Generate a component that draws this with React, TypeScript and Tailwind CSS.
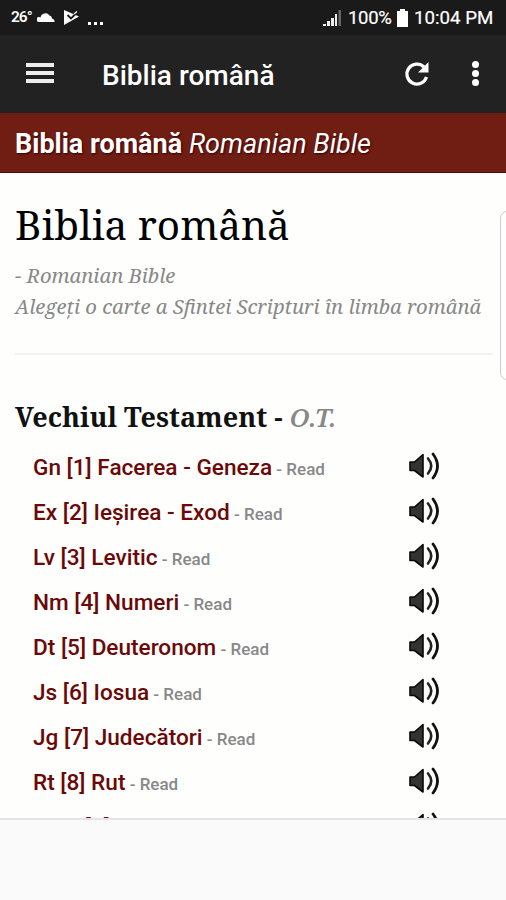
interface Book {
  abbr: string;
  num: number;
  name: string;
}

const BOOKS: Book[] = [
  { abbr: 'Gn', num: 1, name: 'Facerea - Geneza' },
  { abbr: 'Ex', num: 2, name: 'Ieșirea - Exod' },
  { abbr: 'Lv', num: 3, name: 'Levitic' },
  { abbr: 'Nm', num: 4, name: 'Numeri' },
  { abbr: 'Dt', num: 5, name: 'Deuteronom' },
  { abbr: 'Js', num: 6, name: 'Iosua' },
  { abbr: 'Jg', num: 7, name: 'Judecători' },
  { abbr: 'Rt', num: 8, name: 'Rut' },
  { abbr: '1Sm', num: 9, name: '1 Samuel' },
];

function SpeakerIcon() {
  return (
    <svg width="32" height="30" viewBox="0 0 32 30" fill="none" className="mb-[3px]">
      <path d="M2 11h4.500L15 3.500v22.500L6.500 19.500H2z" fill="#333" stroke="#080808" strokeWidth="1.600" strokeLinejoin="round" />
      <path d="M20 7.500Q26.500 15 20 22.500" stroke="#222" strokeWidth="2.600" strokeLinecap="round" />
      <path d="M25 3Q34 15 25 27" stroke="#111" strokeWidth="2.800" strokeLinecap="round" />
    </svg>
  );
}

function StatusBar() {
  return (
    <div className="flex h-[35px] items-center bg-[#1a1a1a] pl-[11px] pr-[13px] pt-px text-white">
      <span className="w-[26px] text-[15.500px] font-semibold tracking-[-1px]">26°</span>
      <svg width="18" height="10" viewBox="0 0 18 10" className="mt-[-3px]">
        <path d="M2 10a2.500 2.500 0 0 1 0-5q1 0 1.500.5A5 5 0 0 1 12.500 3.500a3 3 0 0 1 2.500 3q3 .5 2.500 3.500z" fill="#fff" />
      </svg>
      <svg width="17" height="17" viewBox="0 0 17 17" className="mt-[-2px] ml-[8px]">
        <path d="M1 1l15 6.500L1 16z" fill="#fff" />
        <path d="M4.500 6l3.500 3.500L14.500 3" fill="none" stroke="#1a1a1a" strokeWidth="1.800" />
        <path d="M11 5l3-2.500" stroke="#fff" strokeWidth="1.200" />
      </svg>
      <div className="ml-[8px] mt-[11px] flex gap-[3px]">
        <i className="size-[3px] bg-white" />
        <i className="size-[3px] bg-white" />
        <i className="size-[3px] bg-white" />
      </div>
      <svg width="19" height="18" viewBox="0 0 19 18" className="ml-auto">
        <path d="M0 17h3v-2H0zM4 17h3v-5H4zM8 17h3v-8H8zM12 17h2V5h-2z" fill="#eee" />
        <path d="M15.500 17H18V1h-2.500z" fill="#666" />
      </svg>
      <span className="ml-[6px] w-[45px] whitespace-nowrap pt-px text-[18.500px] tracking-[-0.300px] [-webkit-text-stroke:0.200px_white]">100%</span>
      <svg width="11" height="18" viewBox="0 0 11 18" className="mt-[-1px] ml-[4px]">
        <path d="M3 0h5v2h3v16H0V2h3z" fill="#fff" />
      </svg>
      <span className="ml-[6px] w-[79px] whitespace-nowrap pt-px text-[18.700px] [-webkit-text-stroke:0.200px_white]">10:04 PM</span>
    </div>
  );
}

function AppBar() {
  return (
    <div className="flex h-[78px] items-center bg-[#222] pl-[26px] text-white">
      <div className="mb-[2px] flex w-[28px] flex-col gap-[4px]">
        <i className="h-[4px] bg-[#eee]" />
        <i className="h-[4px] bg-[#eee]" />
        <i className="h-[4px] bg-[#eee]" />
      </div>
      <h1 className="mt-[3px] ml-[48px] whitespace-nowrap text-[28px] font-medium">Biblia română</h1>
      <svg width="26" height="26" viewBox="0 0 26 26" className="mb-px ml-auto mr-[42px]">
        <path d="M22.500 16A10 10 0 1 1 20 6" fill="none" stroke="#fff" strokeWidth="3.200" />
        <path d="M24.500 1v10.500H14z" fill="#fff" />
      </svg>
      <div className="mb-px mr-[27px] flex flex-col gap-[2px]">
        <i className="size-[7px] rounded-full bg-white" />
        <i className="size-[7px] rounded-full bg-white" />
        <i className="size-[7px] rounded-full bg-white" />
      </div>
    </div>
  );
}

function BookRow({ book }: { book: Book }) {
  return (
    <li className="flex h-[45px] shrink-0 items-center justify-between pl-[33px] pr-[66px]">
      <p className="mt-px whitespace-nowrap text-[22.600px] font-medium text-[#6b0808]">
        {book.abbr} [{book.num}] {book.name}
        <span className="text-[17px] text-[#888]"> - Read</span>
      </p>
      <SpeakerIcon />
    </li>
  );
}

export default function App() {
  return (
    <div className="relative flex h-[900px] w-[506px] flex-col overflow-hidden bg-[#fefefd] font-['Roboto',sans-serif]">
      <StatusBar />
      <AppBar />
      <div className="flex h-[60px] items-center border-b border-[#4f0906] bg-[#701d13] pt-[3px] pl-[15px] text-[27px] text-white [text-shadow:1px_1px_2px_#300]">
        <p className="whitespace-nowrap">
          <b>Biblia română</b> <i>Romanian Bible</i>
        </p>
      </div>

      <main className="flex min-h-0 flex-1 flex-col overflow-hidden">
        <header className="mr-[13px] ml-[15px] h-[182px] shrink-0 border-b-2 border-[#f2f2f2] pt-[26px] font-['Noto_Serif',serif]">
          <h2 className="whitespace-nowrap text-[40.400px] leading-[52px] text-black">Biblia română</h2>
          <p className="mt-[9px] whitespace-nowrap text-[20.200px] leading-[31px] text-[#888] italic">
            - Romanian Bible
            <br />
            Alegeți o carte a Sfintei Scripturi în limba română
          </p>
        </header>
        <h3 className="mt-[42px] shrink-0 whitespace-nowrap pl-[15px] font-['Noto_Serif',serif] text-[27px] leading-[40px] font-bold text-[#111]">
          Vechiul Testament - <i className="text-[26px] font-semibold text-[#888]">O.T.</i>
        </h3>
        <ul className="mt-[8px]">
          {BOOKS.map(book => (
            <BookRow key={book.num} book={book} />
          ))}
        </ul>
      </main>

      <footer className="h-[82px] shrink-0 border-t-2 border-[#e4e4e4] bg-[#fafafa]" />

      {/* Edge panel handle */}
      <div className="absolute top-[211px] left-[500px] h-[169px] w-[12px] rounded-l-[7px] border border-[#ccc] bg-[#fefefe]" />
    </div>
  );
}
